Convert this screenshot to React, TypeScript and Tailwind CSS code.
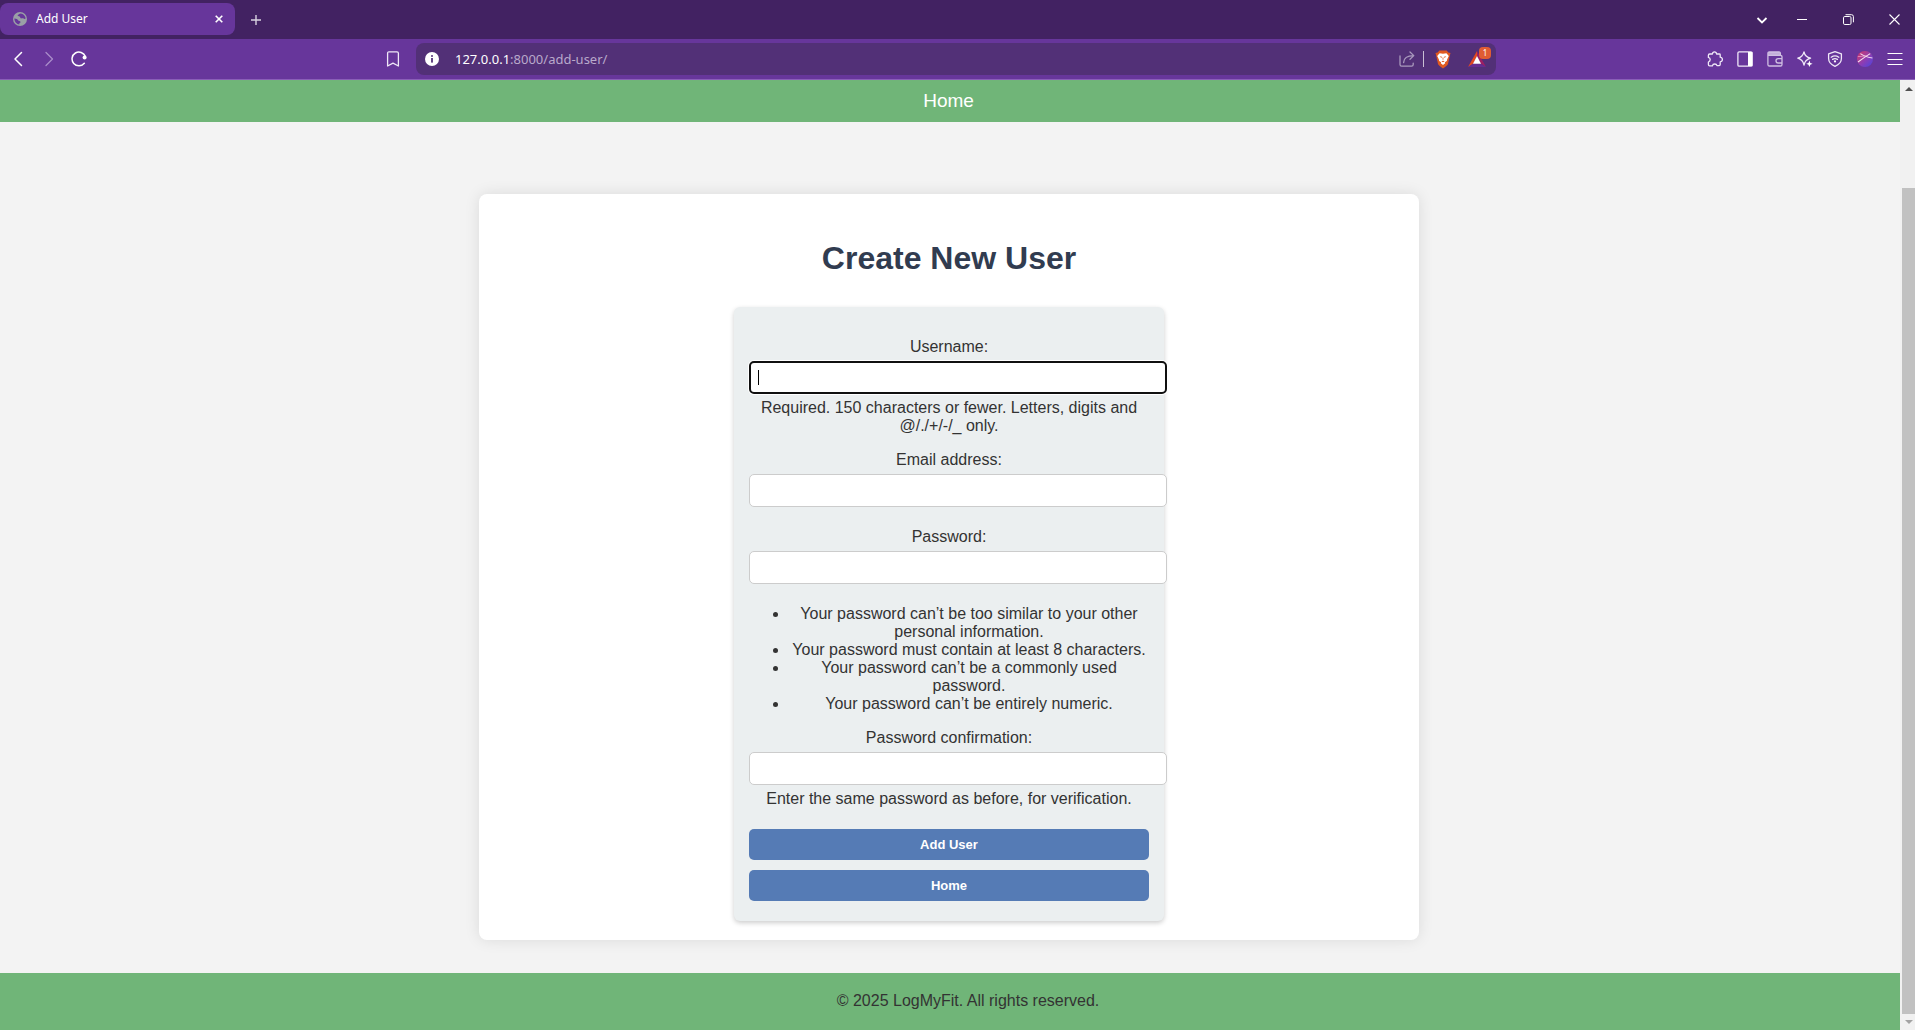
import type { ReactNode } from "react";

function Field({ id, label, type, focused, help }: { id: string; label: string; type: string; focused?: boolean; help?: string }) {
  return (
    <div className="flex flex-col">
      <label htmlFor={id} className="mb-[5px] text-center">{label}</label>
      <div className="relative -mr-[18px] mb-[5px]">
        <input
          id={id}
          type={type}
          className={
            focused
              ? "block h-[33px] w-full rounded-[5px] border-2 border-[#101010] bg-white px-[7px] text-[#111] ring-1 ring-white outline-none"
              : "block h-[33px] w-full rounded-[5px] border border-[#ccc] bg-white px-2 text-[#111] outline-none"
          }
        />
        {focused && <span className="absolute top-[9px] left-[9px] h-[15px] w-px bg-black" />}
      </div>
      {help && <p className="text-center">{help}</p>}
    </div>
  );
}

function Globe() {
  return (
    <svg viewBox="0 0 14 14" className="size-[14px] shrink-0">
      <circle cx="7" cy="7" r="7" fill="#9aa0a6" />
      <path d="M7.8 1.4 C6 1.4 5.6 2.6 4.6 3 C4.8 4 5.6 4.3 6.6 4.4 C7.4 5 7 6 8 6.4 C9.2 6.2 10.2 6.2 11 6.8 C12 7.2 12.4 6.6 12.6 5.9 C12.1 3.8 10.4 1.8 7.8 1.4 Z M1.4 6.6 C1.4 9.8 3.6 12.4 6.4 12.6 C6 11.6 6.6 10.9 7.5 10.5 C7.9 9.6 6.7 8.7 5.5 8.7 C4.6 7.3 3 6.5 1.4 6.6 Z" fill="#67369b" />
    </svg>
  );
}

const stroke = { fill: "none", stroke: "#efe8f7", strokeWidth: 1.3, strokeLinecap: "round", strokeLinejoin: "round" } as const;

function IconButton({ label, children }: { label: string; children: ReactNode }) {
  return (
    <button type="button" aria-label={label} className="flex size-[30px] shrink-0 items-center justify-center">
      {children}
    </button>
  );
}

function TabStrip() {
  return (
    <div className="flex h-[39px] items-center bg-[#422262]">
      <div className="-mt-px flex h-8 w-[235px] items-center rounded-lg bg-[#67369b] pr-3 pl-[13px]">
        <Globe />
        <span className="ml-[9px] flex-1 font-['Noto_Sans',sans-serif] text-[12px] leading-4 text-white">Add User</span>
        <button type="button" aria-label="Close tab">
          <svg viewBox="0 0 8 8" className="size-2"><path d="M.7 .7 L7.3 7.3 M7.3 .7 L.7 7.3" stroke="#fff" strokeWidth="1.6" /></svg>
        </button>
      </div>
      <button type="button" aria-label="New tab" className="ml-[15px]">
        <svg viewBox="0 0 12 12" className="size-3"><path d="M6 1 V11 M1 6 H11" stroke="#d9d2e0" strokeWidth="1.4" /></svg>
      </button>
      <div className="ml-auto flex items-center text-white">
        <button type="button" aria-label="Search tabs" className="flex w-[38px] justify-center">
          <svg viewBox="0 0 12 12" className="size-3"><path d="M1.5 4 L6 8.5 L10.5 4" fill="none" stroke="#fff" strokeWidth="1.8" /></svg>
        </button>
        <button type="button" aria-label="Minimize" className="flex w-[42px] justify-center">
          <svg viewBox="0 0 10 10" className="size-[10px]"><path d="M0 4.5 H10" stroke="#fff" strokeWidth="1" /></svg>
        </button>
        <button type="button" aria-label="Restore" className="flex w-[50px] justify-center">
          <svg viewBox="0 0 11 11" className="size-[11px]" fill="none" stroke="#fff"><rect x=".5" y="2.5" width="7.5" height="8" rx="1.3" /><path d="M2.5 .7 H8.5 Q10.4 .7 10.4 2.6 V8.3" /></svg>
        </button>
        <button type="button" aria-label="Close" className="flex w-[42px] justify-center">
          <svg viewBox="0 0 11 11" className="size-[11px]"><path d="M.5 .5 L10.5 10.5 M10.5 .5 L.5 10.5" stroke="#fff" strokeWidth="1.1" /></svg>
        </button>
      </div>
    </div>
  );
}

function Toolbar() {
  return (
    <div className="flex h-[41px] items-center border-b border-[#8a5fb8] bg-[#67369b] pr-[5px] pl-1">
      <div className="flex flex-1 items-center">
        <IconButton label="Back">
          <svg viewBox="0 0 16 16" className="size-4"><path d="M10.5 1.5 L4 8 L10.5 14.5" {...stroke} stroke="#fff" strokeWidth={1.5} /></svg>
        </IconButton>
        <IconButton label="Forward">
          <svg viewBox="0 0 16 16" className="size-4"><path d="M5 1.5 L11.5 8 L5 14.5" {...stroke} stroke="#a98cc9" /></svg>
        </IconButton>
        <IconButton label="Reload">
          <svg viewBox="0 0 16 16" className="size-4"><path d="M13.3 12.3 A6.9 6.9 0 1 1 14.4 5.5" {...stroke} stroke="#fff" strokeWidth={1.5} /><circle cx="13.6" cy="6.6" r="2" fill="#fff" /></svg>
        </IconButton>
      </div>
      <div className="mr-10 flex w-[1118px] shrink-0 items-center">
        <IconButton label="Bookmark">
          <svg viewBox="0 0 16 16" className="size-4"><path d="M2.6 2.2 Q2.6 .8 4 .8 H12 Q13.4 .8 13.4 2.2 V15 L8 12.2 L2.6 15 Z" {...stroke} /></svg>
        </IconButton>
        <div className="ml-2 flex h-8 flex-1 items-center rounded-lg bg-[#523077] pr-1 pl-[9px]">
          <svg viewBox="0 0 14 14" className="size-[14px] shrink-0"><circle cx="7" cy="7" r="7" fill="#fff" /><rect x="6.1" y="6" width="1.8" height="4.6" fill="#523077" /><circle cx="7" cy="4" r="1" fill="#523077" /></svg>
          <div className="ml-4 flex-1 font-['Noto_Sans',sans-serif] text-[13px] leading-5 text-[#b9a9cb]"><span className="text-white">127.0.0.1</span>:8000/add-user/</div>
          <IconButton label="Share">
            <svg viewBox="0 0 16 16" className="size-4"><path d="M1 5 V13.6 Q1 15.2 2.6 15.2 H12.6 Q14.2 15.2 14.2 13.6 V12.2 M4.6 11.6 C4.8 7.2 7.6 4.6 14.6 4.6 M11 1 L14.8 4.6 L11 8.2" {...stroke} stroke="#a999bd" /></svg>
          </IconButton>
          <span className="mr-1 ml-px h-4 w-px bg-[#c9bfd4]" />
          <IconButton label="Shields">
            <svg viewBox="0 0 16 19" className="h-[19px] w-4">
              <path d="M4.4 .5 H11.6 L13.4 2.4 L15.5 3 L14.7 6 L13 14 Q12.6 15.4 8 18.6 Q3.4 15.4 3 14 L1.3 6 L.5 3 L2.6 2.4 Z" fill="#e0591f" />
              <path d="M4.6 3.2 L8 3.8 L11.4 3.2 L13.8 6 L12.2 9.2 L11.8 11 L9.9 12.2 L10.2 13.2 L8 15 L5.8 13.2 L6.1 12.2 L4.2 11 L3.8 9.2 L2.2 6 Z" fill="#fff" />
              <path d="M4.6 6.2 L7 6.8 L6.4 7.9 Z M11.4 6.2 L9 6.8 L9.6 7.9 Z M6.3 11.2 L8 12.3 L9.7 11.2 L8 10.7 Z M7.6 7.6 H8.4 V9.8 H7.6 Z" fill="#e0591f" />
            </svg>
          </IconButton>
          <div className="relative ml-1">
            <IconButton label="Rewards">
              <svg viewBox="0 0 18 16" className="h-4 w-[18px]"><path d="M9 0 L0 16 L5.5 12.5 L9 5 Z" fill="#e04a20" /><path d="M9 0 L18 16 L12.5 12.5 L9 5 Z" fill="#9e1f63" /><path d="M0 16 H18 L12.5 12.5 H5.5 Z" fill="#662d91" /><path d="M9 5 L13 12.7 H5 Z" fill="#fff" /></svg>
            </IconButton>
            <span className="absolute top-[3px] left-[17px] flex size-3 items-center justify-center rounded bg-[#e05c33] font-['Noto_Sans',sans-serif] text-[8px] leading-3 text-white">1</span>
          </div>
        </div>
      </div>
      <div className="flex flex-1 items-center justify-end">
        <IconButton label="Extensions">
          <svg viewBox="0 0 16 16" className="size-4"><path d="M2.6 3 H5.4 Q5.6 .8 7.5 .8 Q9.4 .8 9.6 3 H12.4 Q13.2 3 13.2 3.8 V6.2 Q15.4 6.5 15.4 8.5 Q15.4 10.5 13.2 10.8 V13.6 Q13.2 14.6 12.2 14.6 H10 Q9.6 13 7.7 13 Q5.8 13 5.4 14.8 H2.6 Q1.4 14.8 1.4 13.6 V11 Q3.2 10.4 3.2 8.6 Q3.2 6.9 1.4 6.4 V4.2 Q1.4 3 2.6 3 Z" {...stroke} /></svg>
        </IconButton>
        <IconButton label="Sidebar">
          <svg viewBox="0 0 16 16" className="size-4"><rect x=".9" y=".9" width="14.2" height="14.2" rx="1.2" {...stroke} /><path d="M11 1 H15.4 V15 H11 Z" fill="#fff" /></svg>
        </IconButton>
        <IconButton label="Wallet">
          <svg viewBox="0 0 16 16" className="size-4"><path d="M1 2.4 Q1 1 2.4 1 H12 Q13.4 1 13.4 2.6 V4.4 H1 Z" fill="#c2add9" /><path d="M13.4 4.4 V2.6 Q13.4 1 12 1 H2.4 Q.9 1 .9 2.4 V13.4 Q.9 15 2.5 15 H13.5 Q15 15 15 13.4 V6 Q15 4.4 13.4 4.4 H1 M15 7.6 H11.2 A2.1 2.1 0 0 0 11.2 12 H15" {...stroke} stroke="#cfbfe2" /></svg>
        </IconButton>
        <IconButton label="Assistant">
          <svg viewBox="0 0 16 16" className="size-4"><path d="M7 .8 Q8 5.9 13.6 7.2 Q8.2 8.6 7 14 Q5.8 8.6 .8 7.2 Q5.8 5.9 7 .8 Z" {...stroke} /><path d="M12.4 9.6 L13.3 11.9 L15.6 12.8 L13.3 13.7 L12.4 16 L11.5 13.7 L9.2 12.8 L11.5 11.9 Z" fill="#fff" /></svg>
        </IconButton>
        <IconButton label="VPN">
          <svg viewBox="0 0 16 16" className="size-4"><path d="M8 .7 L14.4 2.8 V7.6 Q14.4 12.8 8 15.4 Q1.6 12.8 1.6 7.6 V2.8 Z M4.2 6.2 Q8 3.6 11.8 6.2 M5.6 8.4 Q8 6.8 10.4 8.4" {...stroke} /><circle cx="8" cy="10.4" r="1.1" fill="#fff" /></svg>
        </IconButton>
        <IconButton label="Profile">
          <svg viewBox="0 0 16 16" className="size-4">
            <defs><linearGradient id="avatar" x1="0" y1="0" x2="1" y2="1"><stop offset="0" stopColor="#d83a62" /><stop offset=".55" stopColor="#8b3db5" /><stop offset="1" stopColor="#4a45e0" /></linearGradient></defs>
            <circle cx="8" cy="8" r="8" fill="url(#avatar)" />
            <path d="M1 11 Q7 6.5 13.2 2.6 M3.4 2.6 Q8 6 15.4 7" fill="none" stroke="#f6dff0" strokeWidth="1.1" />
            <path d="M.8 5.6 Q6 5.4 10.6 4.6" fill="none" stroke="#f0a8cf" strokeWidth=".7" />
          </svg>
        </IconButton>
        <IconButton label="Menu">
          <svg viewBox="0 0 16 16" className="size-4"><path d="M.5 2.5 H15.5 M.5 8.5 H15.5 M.5 13.5 H15.5" stroke="#fff" strokeWidth="1.2" /></svg>
        </IconButton>
      </div>
    </div>
  );
}

export default function App() {
  return (
    <div className="flex min-h-screen flex-col bg-[#f3f3f3] font-['Liberation_Sans',Arial,sans-serif] text-base leading-[18px] text-[#333]">
      <TabStrip />
      <Toolbar />
      <div className="flex flex-1">
        <div className="flex min-w-0 flex-1 flex-col">
          <nav className="flex h-[42px] items-center justify-center bg-[#70b578] pr-[3px]">
            <a href="#home" className="text-[19px] leading-6 text-white">Home</a>
          </nav>
          <main className="flex flex-1 flex-col items-center pt-[72px] pr-[2px] pb-[33px]">
            <section className="flex w-full max-w-[940px] flex-1 flex-col items-center rounded-lg bg-white px-5 pt-[46px] pb-[19px] shadow-[0_0_15px_rgba(0,0,0,0.1)]">
              <h1 className="mb-[30px] text-[32px] leading-[37px] font-bold text-[#313c50]">Create New User</h1>
              <form className="flex w-full max-w-[430px] flex-col rounded-md bg-[#ebeff0] px-[15px] pt-[31px] pb-5 shadow-[0_2px_5px_rgba(0,0,0,0.2)]" onSubmit={(e) => e.preventDefault()}>
                <div className="flex flex-col gap-4">
                  <Field id="username" label="Username:" type="text" focused help="Required. 150 characters or fewer. Letters, digits and @/./+/-/_ only." />
                  <Field id="email" label="Email address:" type="email" />
                  <Field id="password" label="Password:" type="password" />
                  <ul className="list-disc pl-10 text-center">
                    <li>Your password can’t be too similar to your other personal information.</li>
                    <li>Your password must contain at least 8 characters.</li>
                    <li>Your password can’t be a commonly used password.</li>
                    <li>Your password can’t be entirely numeric.</li>
                  </ul>
                  <Field id="confirm" label="Password confirmation:" type="password" help="Enter the same password as before, for verification." />
                </div>
                <div className="mt-[21px] flex flex-col gap-[10px] text-[13px] leading-[15px] font-bold text-white">
                  <button type="submit" className="rounded-[5px] bg-[#557bb5] py-2">Add User</button>
                  <button type="button" className="rounded-[5px] bg-[#557bb5] py-2">Home</button>
                </div>
              </form>
            </section>
          </main>
          <footer className="flex h-[57px] items-center justify-center bg-[#70b578] pb-[2px] pl-9">
            <p>© 2025 LogMyFit. All rights reserved.</p>
          </footer>
        </div>
        <div className="flex w-[15px] shrink-0 flex-col items-end bg-[#f1f1f1]">
          <div className="flex h-[108px] w-[13px] justify-center pt-[7px]">
            <svg viewBox="0 0 8 4" className="h-1 w-2"><path d="M4 0 L8 4 H0 Z" fill="#505050" /></svg>
          </div>
          <div className="w-[13px] flex-1 bg-[#c1c1c1]" />
          <div className="flex h-4 w-[13px] justify-center pt-[6px]">
            <svg viewBox="0 0 8 4" className="h-1 w-2"><path d="M0 0 H8 L4 4 Z" fill="#a3a3a3" /></svg>
          </div>
        </div>
      </div>
    </div>
  );
}
